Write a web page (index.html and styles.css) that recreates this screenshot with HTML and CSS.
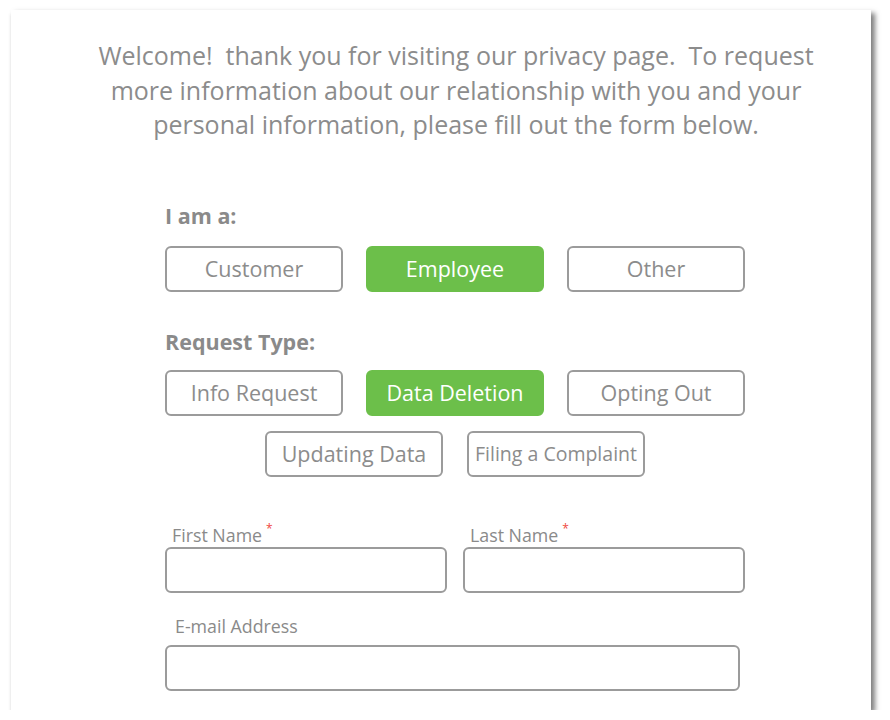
FILE: index.html
```html
<!DOCTYPE html>
<html lang="en">
<head>
<meta charset="utf-8">
<title>Privacy Request</title>
<link rel="stylesheet" href="styles.css">
</head>
<body>
<div class="card">
  <p class="intro">Welcome!&nbsp; thank you for visiting our privacy page.&nbsp; To request more information about our relationship with you and your personal information, please fill out the form below.</p>
  <form class="form">
    <div class="group-label">I am a:</div>
    <div class="choices">
      <button type="button" class="choice">Customer</button>
      <button type="button" class="choice active">Employee</button>
      <button type="button" class="choice">Other</button>
    </div>
    <div class="group-label second">Request Type:</div>
    <div class="choices">
      <button type="button" class="choice">Info Request</button>
      <button type="button" class="choice active">Data Deletion</button>
      <button type="button" class="choice">Opting Out</button>
    </div>
    <div class="choices centered">
      <button type="button" class="choice">Updating Data</button>
      <button type="button" class="choice small">Filing a Complaint</button>
    </div>
    <div class="fields">
      <label class="field">
        <span class="field-label">First Name<span class="req">*</span></span>
        <input type="text" class="input">
      </label>
      <label class="field">
        <span class="field-label">Last Name<span class="req">*</span></span>
        <input type="text" class="input">
      </label>
    </div>
    <label class="field email">
      <span class="field-label">E-mail Address</span>
      <input type="text" class="input">
    </label>
  </form>
</div>
</body>
</html>
```
FILE: styles.css
```css
html, body {
  margin: 0;
  padding: 0;
  background: #ffffff;
}
body {
  padding: 10px 0 0 11px;
  font-family: "Open Sans", "Noto Sans", sans-serif;
  color: #8a8a8a;
}
.card {
  width: 860px;
  height: 700px;
  background: #fff;
  box-shadow: 4px 3px 5px rgba(0, 0, 0, 0.5), -1px 3px 3px -1px rgba(0, 0, 0, 0.12);
  overflow: hidden;
}
.intro {
  margin: 28px 0 0 60px;
  width: 770px;
  text-align: center;
  font-size: 25px;
  line-height: 34.5px;
  color: #8c8c8c;
}
.form {
  margin: 60px 0 0 154px;
  width: 580px;
}
.group-label {
  font-weight: 700;
  font-size: 21.5px;
  line-height: 28px;
  color: #8a8a8a;
  margin-bottom: 16px;
}
.group-label.second {
  margin-top: 36px;
  margin-bottom: 14px;
}
.choices {
  display: flex;
  justify-content: space-between;
}
.choices.centered {
  justify-content: center;
  gap: 24px;
  margin-top: 15px;
}
.choice {
  width: 178px;
  height: 46px;
  box-sizing: border-box;
  border: 2px solid #9b9b9b;
  border-radius: 6px;
  background: #fff;
  font-family: "Open Sans", "Noto Sans", sans-serif;
  font-size: 21.5px;
  color: #8c8c8c;
  padding: 0;
}
.choice.active {
  background: #6cbf4a;
  border-color: #6cbf4a;
  color: #fff;
}
.choice.small {
  font-size: 19.5px;
  white-space: nowrap;
}
.fields {
  display: flex;
  gap: 16px;
  margin-top: 40px;
}
.field {
  display: flex;
  flex-direction: column;
  width: 282px;
}
.field-label {
  font-size: 17.8px;
  line-height: 24px;
  padding-left: 7px;
  color: #8a8a8a;
}
.req {
  color: #f0483e;
  font-size: 12px;
  vertical-align: 9px;
  margin-left: 4px;
}
.input {
  height: 46px;
  box-sizing: border-box;
  border: 2px solid #9b9b9b;
  border-radius: 6px;
  margin-top: 0;
}
.field.email {
  width: 575px;
  margin-top: 21px;
}
.field.email .field-label {
  padding-left: 10px;
  margin-bottom: 7px;
}
```
